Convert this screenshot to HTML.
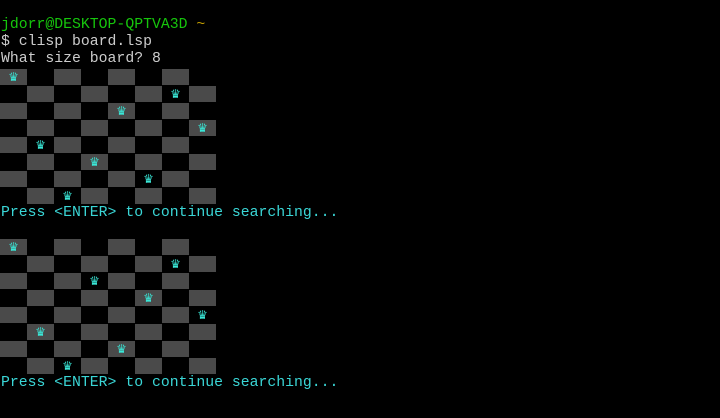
<!DOCTYPE html>
<html><head><meta charset="utf-8"><style>
html,body{margin:0;padding:0;background:#000;width:720px;height:418px;overflow:hidden}
body{position:relative;font-family:"Liberation Mono","DejaVu Sans Mono",monospace;font-size:14.8px;line-height:17px;color:#cccccc}
.t{position:absolute;left:1px;white-space:pre}
.g{color:#16c60c}.y{color:#c19c00}.c{color:#3ad6d6}
.sq{position:absolute;width:27px;height:16px;background:#4a4a4a}
.q{position:absolute;width:27px;height:17px;text-align:center;color:#3ae8d8;font-family:"DejaVu Sans",sans-serif;font-size:12px;line-height:17px}
</style></head><body>
<div class="t g" style="top:17px">jdorr@DESKTOP-QPTVA3D <span class="y">~</span></div>
<div class="t" style="top:34px">$ clisp board.lsp</div>
<div class="t" style="top:51px">What size board? 8</div>
<div class="t c" style="top:205px">Press &lt;ENTER&gt; to continue searching...</div>
<div class="t c" style="top:375px">Press &lt;ENTER&gt; to continue searching...</div>
<div id="b"></div>
<script>
function board(top,qs){var h='';for(var r=0;r<8;r++){for(var c=0;c<8;c++){if((r+c)%2==0)h+='<div class="sq" style="left:'+(c*27)+'px;top:'+(top+r*17)+'px"></div>';}
h+='<div class="q" style="left:'+(qs[r]*27)+'px;top:'+(top+r*17)+'px">♛</div>';}return h;}
document.getElementById('b').innerHTML=board(69,[0,6,4,7,1,3,5,2])+board(239,[0,6,3,5,7,1,4,2]);
</script>
</body></html>
